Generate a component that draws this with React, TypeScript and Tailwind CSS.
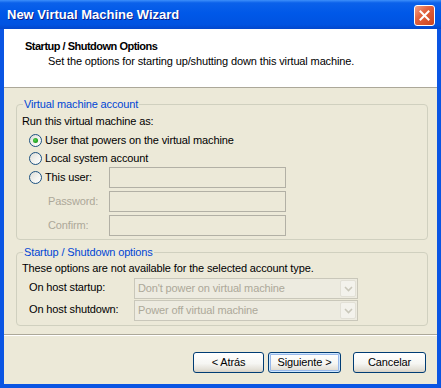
import React from 'react';

function Radio({ checked }: { checked?: boolean }) {
  return (
    <span className="w-[13px] h-[13px] shrink-0 rounded-full border border-[#1C5180] bg-[linear-gradient(135deg,#DCDCD7_0%,#F3F3EF_55%,#FFFFFF_100%)] flex items-center justify-center">
      {checked && <span className="w-[5px] h-[5px] rounded-full bg-[radial-gradient(circle_at_40%_40%,#55D451_0%,#21A121_60%,#1A8A1A_100%)]" />}
    </span>
  );
}

function DisabledInput() {
  return <div className="w-[177px] h-[21px] border border-[#B2B0A5] bg-[#ECE9D8]" />;
}

function DisabledSelect({ value }: { value: string }) {
  return (
    <div className="w-[224px] h-[21px] border border-[#C9C7BA] bg-[#EDEBE0] flex items-center">
      <span className="flex-1 pl-[3px] text-[#ACA899] whitespace-nowrap">{value}</span>
      <span className="w-[16px] h-[17px] mr-[1px] rounded-[2px] border border-[#E2E0D6] bg-[#F3F2EC] flex items-center justify-center">
        <svg width="9" height="6" viewBox="0 0 9 6">
          <path d="M1 1 L4.5 4.5 L8 1" fill="none" stroke="#C9C7BA" strokeWidth="1.6" />
        </svg>
      </span>
    </div>
  );
}

function Button({ children, isDefault, width }: { children: React.ReactNode; isDefault?: boolean; width: string }) {
  return (
    <button
      className={
        width +
        ' h-[21px] rounded-[3px] border border-[#003C74] bg-[linear-gradient(180deg,#FFFFFF_0%,#F6F6F3_55%,#E4E1D8_85%,#D6D0C5_100%)] text-black text-[11px] leading-[13px] flex items-center justify-center ' +
        (isDefault ? 'shadow-[inset_0_0_0_1px_#CEE7FF,inset_0_0_0_2px_#98B8EA]' : '')
      }
    >
      {children}
    </button>
  );
}

export default function App() {
  return (
    <div className="w-[441px] h-[388px] flex flex-col bg-[#0A55E3] font-['Liberation_Sans',Arial,sans-serif] text-[11px] leading-[13px] tracking-[-0.13px] text-black select-none overflow-hidden">
      {/* Title bar */}
      <div className="h-[29px] shrink-0 flex items-center justify-between pl-[7px] pr-[6px] pt-[1px] bg-[linear-gradient(180deg,#3D8FFA_0%,#0B61EA_10%,#0058E8_45%,#0053E1_85%,#0347CC_100%)]">
        <span className="text-white font-bold text-[13px] leading-[16px] tracking-normal [text-shadow:1px_1px_0_#0A1E8C]">
          New Virtual Machine Wizard
        </span>
        <span className="w-[21px] h-[21px] rounded-[3px] border border-white bg-[linear-gradient(135deg,#F0A28A_0%,#E2623F_40%,#C9441F_100%)] flex items-center justify-center">
          <svg width="11" height="11" viewBox="0 0 11 11">
            <path d="M1.5 1.5 L9.5 9.5 M9.5 1.5 L1.5 9.5" stroke="white" strokeWidth="2" strokeLinecap="square" />
          </svg>
        </span>
      </div>

      {/* Window body */}
      <div className="flex-1 mx-[4px] mb-[4px] bg-[#ECE9D8] flex flex-col">
        {/* Wizard header */}
        <div className="h-[59px] shrink-0 bg-white border-b border-[#ACA899] pl-[21px] pt-[11px]">
          <p className="font-bold tracking-[-0.5px]">Startup / Shutdown Options</p>
          <p className="mt-[2px] pl-[23px]">Set the options for starting up/shutting down this virtual machine.</p>
        </div>

        {/* Content */}
        <div className="pl-[12px] pr-[9px]">
          <fieldset className="mt-[10px] border border-[#D0D0BF] rounded-[4px] pl-[5px] pr-[5px] pb-[3px]">
            <legend className="ml-[1px] px-[1px] text-[#0046D5]">Virtual machine account</legend>
            <p className="mt-[4px]">Run this virtual machine as:</p>
            <div className="mt-[3px] flex flex-col">
              <label className="h-[18px] flex items-center gap-[3px] pl-[7px]">
                <Radio checked />
                <span>User that powers on the virtual machine</span>
              </label>
              <label className="h-[18px] flex items-center gap-[3px] pl-[7px]">
                <Radio />
                <span>Local system account</span>
              </label>
              <div className="flex flex-col gap-[3px]">
                <div className="h-[21px] flex items-center">
                  <label className="w-[87px] flex items-center gap-[3px] pl-[7px]">
                    <Radio />
                    <span>This user:</span>
                  </label>
                  <DisabledInput />
                </div>
                <div className="h-[21px] flex items-center">
                  <span className="w-[87px] pl-[26px] text-[#ACA899]">Password:</span>
                  <DisabledInput />
                </div>
                <div className="h-[21px] flex items-center">
                  <span className="w-[87px] pl-[26px] text-[#ACA899]">Confirm:</span>
                  <DisabledInput />
                </div>
              </div>
            </div>
          </fieldset>

          <fieldset className="mt-[6px] border border-[#D0D0BF] rounded-[4px] pl-[5px] pr-[5px] pb-[4px]">
            <legend className="ml-[1px] px-[1px] text-[#0046D5]">Startup / Shutdown options</legend>
            <p className="mt-[3px]">These options are not available for the selected account type.</p>
            <div className="mt-[3px] flex flex-col gap-[1px]">
              <div className="h-[21px] flex items-center">
                <span className="w-[112px] pl-[7px] -mt-[3px]">On host startup:</span>
                <DisabledSelect value="Don't power on virtual machine" />
              </div>
              <div className="h-[21px] flex items-center">
                <span className="w-[112px] pl-[7px] -mt-[2px]">On host shutdown:</span>
                <DisabledSelect value="Power off virtual machine" />
              </div>
            </div>
          </fieldset>
        </div>

        {/* Footer */}
        <div className="mt-auto h-[2px] border-t border-b border-t-[#ACA899] border-b-white" />
        <div className="mt-[16px] mb-[11px] pr-[11px] flex justify-end">
          <Button width="w-[71px]">&lt; Atrás</Button>
          <div className="ml-[4px]">
            <Button width="w-[73px]" isDefault>Siguiente &gt;</Button>
          </div>
          <div className="ml-[12px]">
            <Button width="w-[73px]">Cancelar</Button>
          </div>
        </div>
      </div>
    </div>
  );
}
